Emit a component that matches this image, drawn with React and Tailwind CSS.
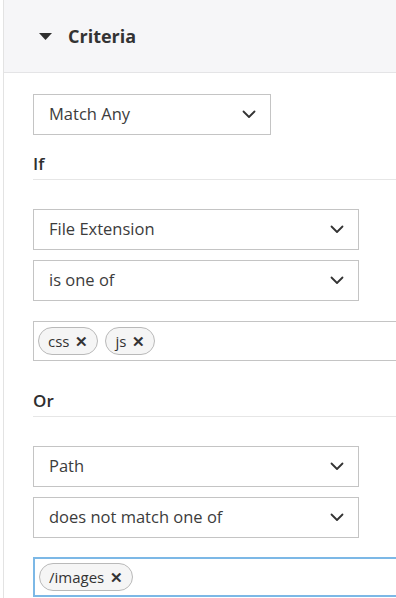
import React from 'react';

const font = { fontFamily: '"Open Sans", "Noto Sans", sans-serif' };

const Chevron = () => (
  <svg width="14" height="9" viewBox="0 0 14 9" fill="none" className="shrink-0">
    <path d="M1.5 1.5 L7 7 L12.5 1.5" stroke="#333" strokeWidth="1.8" strokeLinecap="round" strokeLinejoin="round" />
  </svg>
);

const Select = ({ label, width = 'w-[326px]', className = '' }) => (
  <div className={`${width} h-[41px] border border-[#c4c4c4] bg-white flex items-center justify-between pl-[15px] pr-[14px] ${className}`}>
    <span className="text-[16.5px] text-[#3c3c3c]">{label}</span>
    <Chevron />
  </div>
);

const Tag = ({ label }) => (
  <span className="h-[28px] px-[9px] rounded-full border border-[#b9b9b9] bg-[#f5f5f5] flex items-center gap-[6px] text-[15px] text-[#333]">
    {label}
    <span className="text-[15px] font-bold leading-none">✕</span>
  </span>
);

const TagInput = ({ tags, focused }) => (
  <div
    className={`w-[400px] h-[40px] border flex items-center gap-[7px] pl-[4px] ${
      focused ? 'border-[#7cb8e6] border-2' : 'border-[#c4c4c4]'
    }`}
  >
    {tags.map((t) => (
      <Tag key={t} label={t} />
    ))}
  </div>
);

const Section = ({ label }) => (
  <div className="w-[400px] h-[30px] border-b border-[#e6e6e6] flex items-end pb-[3px]">
    <span className="text-[17px] text-[#2e2e2e] font-semibold">{label}</span>
  </div>
);

export default function App() {
  return (
    <div className="w-[396px] h-[598px] overflow-hidden bg-white" style={font}>
      <div className="ml-[3px] w-[420px] h-full border-l border-[#e3e3e3]">
        <div className="h-[73px] bg-[#f6f6f8] border-b border-[#e4e4e6] flex items-center pl-[34px] gap-[15px]">
          <svg width="15" height="9" viewBox="0 0 15 9">
            <path d="M1 1 L14 1 L7.5 8 Z" fill="#2f2f2f" />
          </svg>
          <span className="text-[18px] font-bold text-[#333]">Criteria</span>
        </div>
        <div className="pl-[29px]">
          <Select label="Match Any" width="w-[238px]" className="mt-[21px] h-[40px]" />
          <div className="mt-[15px]">
            <Section label="If" />
          </div>
          <Select label="File Extension" className="mt-[29px]" />
          <Select label="is one of" className="mt-[10px] h-[40px]" />
          <div className="mt-[20px]">
            <TagInput tags={['css', 'js']} />
          </div>
          <div className="mt-[26px]">
            <Section label="Or" />
          </div>
          <Select label="Path" className="mt-[29px]" />
          <Select label="does not match one of" className="mt-[10px]" />
          <div className="mt-[19px]">
            <TagInput tags={['/images']} focused />
          </div>
        </div>
      </div>
    </div>
  );
}
